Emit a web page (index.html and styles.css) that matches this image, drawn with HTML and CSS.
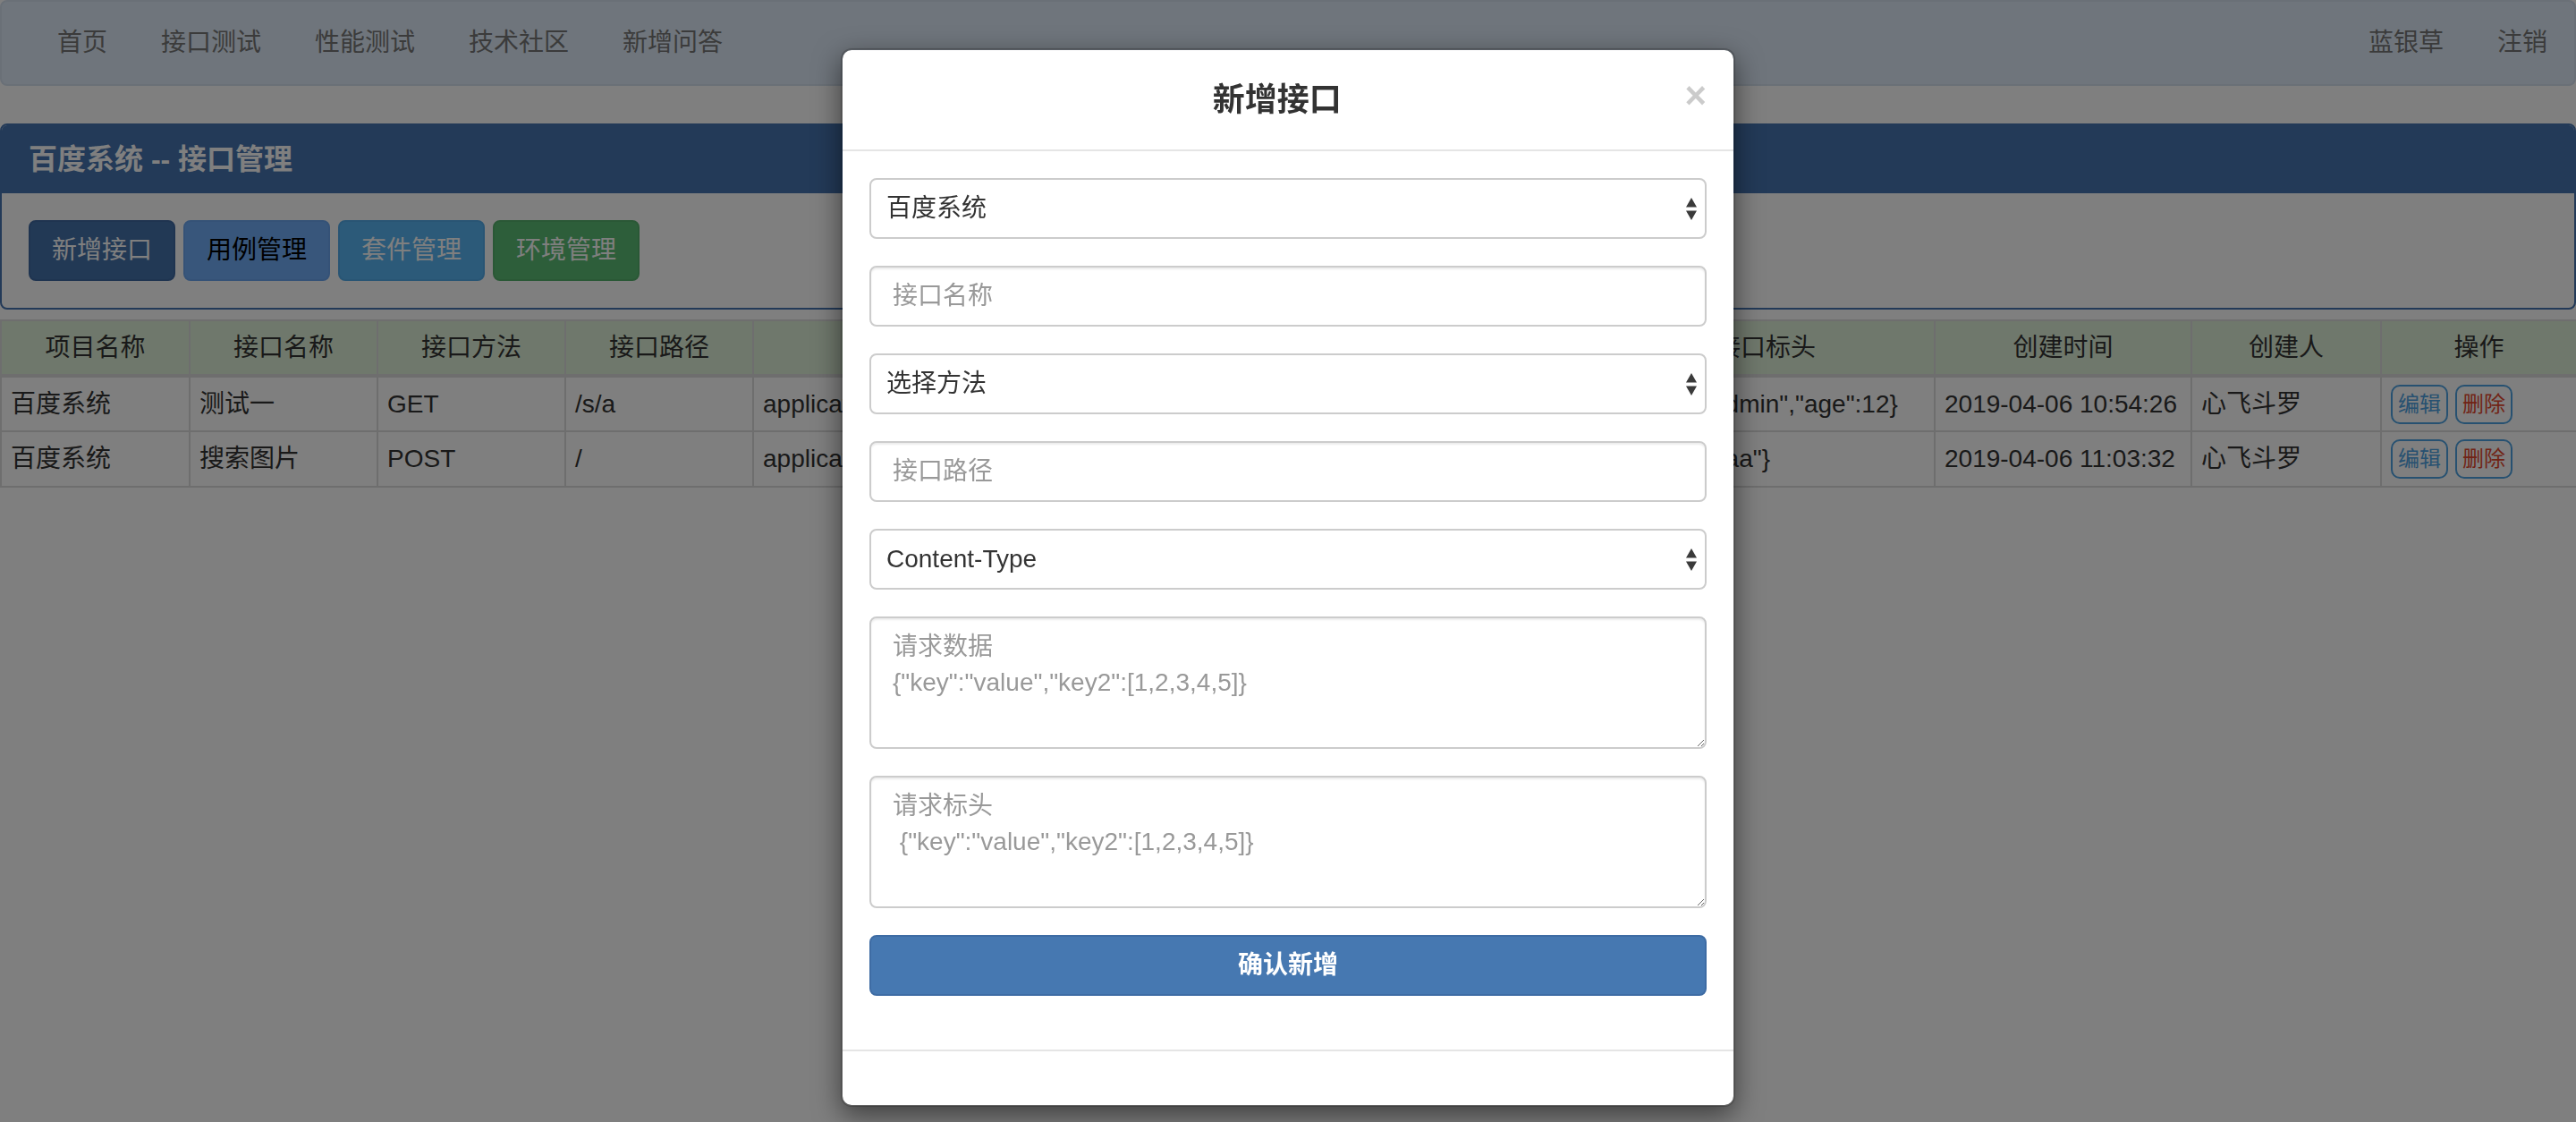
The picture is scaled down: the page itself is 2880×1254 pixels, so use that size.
FILE: index.html
```html
<!DOCTYPE html>
<html lang="zh-CN">
<head>
<meta charset="utf-8">
<title>百度系统 -- 接口管理</title>
<link rel="stylesheet" href="styles.css">
</head>
<body>
<nav class="navbar">
  <ul class="nav nav-left">
    <li>首页</li>
    <li>接口测试</li>
    <li>性能测试</li>
    <li>技术社区</li>
    <li>新增问答</li>
  </ul>
  <ul class="nav nav-right">
    <li>蓝银草</li>
    <li>注销</li>
  </ul>
</nav>

<section class="panel">
  <div class="panel-heading"><h3 class="panel-title">百度系统 -- 接口管理</h3></div>
  <div class="panel-body">
    <button class="btn btn-primary">新增接口</button>
    <button class="btn btn-light">用例管理</button>
    <button class="btn btn-info">套件管理</button>
    <button class="btn btn-success">环境管理</button>
  </div>
</section>

<table class="tbl">
  <colgroup>
    <col class="c1"><col class="c2"><col class="c3"><col class="c4"><col class="c5">
    <col class="c6"><col class="c7"><col class="c8"><col class="c9"><col class="c10">
  </colgroup>
  <thead>
    <tr>
      <th>项目名称</th><th>接口名称</th><th>接口方法</th><th>接口路径</th><th>数据类型</th>
      <th>请求数据</th><th>接口标头</th><th>创建时间</th><th>创建人</th><th>操作</th>
    </tr>
  </thead>
  <tbody>
    <tr>
      <td>百度系统</td><td>测试一</td><td>GET</td><td>/s/a</td><td>application/json</td>
      <td>{"wd":"test"}</td><td>{"name":"admin","age":12}</td><td>2019-04-06 10:54:26</td><td>心飞斗罗</td>
      <td><div class="acts"><span class="act act-edit">编辑</span><span class="act act-del">删除</span></div></td>
    </tr>
    <tr>
      <td>百度系统</td><td>搜索图片</td><td>POST</td><td>/</td><td>application/json</td>
      <td>{"wd":"图片"}</td><td>{"name":"aaa"}</td><td>2019-04-06 11:03:32</td><td>心飞斗罗</td>
      <td><div class="acts"><span class="act act-edit">编辑</span><span class="act act-del">删除</span></div></td>
    </tr>
  </tbody>
</table>

<div class="backdrop"></div>

<div class="modal">
  <div class="modal-header">
    <h4 class="modal-title">新增接口</h4>
    <span class="close">×</span>
  </div>
  <form class="modal-body">
    <div class="form-group">
      <div class="fc select"><span>百度系统</span><svg class="arrows" width="12" height="25" viewBox="0 0 12 25"><path d="M6 0 L12 10.5 L0 10.5 Z M0 14.5 L12 14.5 L6 25 Z" fill="#3a3a3a"/></svg></div>
    </div>
    <div class="form-group">
      <input class="fc" type="text" placeholder="接口名称">
    </div>
    <div class="form-group">
      <div class="fc select"><span>选择方法</span><svg class="arrows" width="12" height="25" viewBox="0 0 12 25"><path d="M6 0 L12 10.5 L0 10.5 Z M0 14.5 L12 14.5 L6 25 Z" fill="#3a3a3a"/></svg></div>
    </div>
    <div class="form-group">
      <input class="fc" type="text" placeholder="接口路径">
    </div>
    <div class="form-group">
      <div class="fc select"><span>Content-Type</span><svg class="arrows" width="12" height="25" viewBox="0 0 12 25"><path d="M6 0 L12 10.5 L0 10.5 Z M0 14.5 L12 14.5 L6 25 Z" fill="#3a3a3a"/></svg></div>
    </div>
    <div class="form-group">
      <textarea class="fc ta" placeholder="请求数据&#10;{&quot;key&quot;:&quot;value&quot;,&quot;key2&quot;:[1,2,3,4,5]}"></textarea>
    </div>
    <div class="form-group">
      <textarea class="fc ta" placeholder="请求标头&#10; {&quot;key&quot;:&quot;value&quot;,&quot;key2&quot;:[1,2,3,4,5]}"></textarea>
    </div>
    <div class="form-group">
      <button type="button" class="btn-confirm">确认新增</button>
    </div>
  </form>
  <div class="modal-footer"></div>
</div>
</body>
</html>
```
FILE: styles.css
```css
* {
  box-sizing: border-box;
}

html, body {
  margin: 0;
  padding: 0;
}

body {
  background: #ffffff;
  color: #333333;
  font-family: "Liberation Sans", "Noto Sans CJK SC", sans-serif;
  font-size: 28px;
  line-height: 40px;
  height: 1254px;
  overflow: hidden;
}

/* ---------- navbar ---------- */
.navbar {
  display: flex;
  justify-content: space-between;
  align-items: center;
  height: 96px;
  background: #deeaf8;
  border: 2px solid #d4e0ef;
  border-radius: 8px;
  padding: 0 0 0 32px;
}

.nav {
  display: flex;
  list-style: none;
  margin: 0;
  padding: 0;
}

.nav li {
  padding: 0 30px;
  color: #777777;
  line-height: 40px;
}

/* ---------- panel ---------- */
.panel {
  margin-top: 42px;
  margin-bottom: 11px;
  border: 2px solid #4674b0;
  border-radius: 8px;
  background: #ffffff;
}

.panel-heading {
  background: #4674b0;
  padding: 20px 30px;
  border-radius: 6px 6px 0 0;
}

.panel-title {
  margin: 0;
  font-size: 32px;
  line-height: 36px;
  font-weight: bold;
  color: #ffffff;
}

.panel-body {
  display: flex;
  gap: 9px;
  padding: 30px;
}

.btn {
  height: 68px;
  padding: 0 24px;
  font-family: inherit;
  font-size: 28px;
  line-height: 40px;
  border: 2px solid transparent;
  border-radius: 8px;
  color: #ffffff;
}

.btn-primary {
  background: #4472ab;
  border-color: #3e68a0;
}

.btn-light {
  background: #70adf7;
  border-color: #6aa5ee;
  color: #000000;
}

.btn-info {
  background: #58b5f3;
  border-color: #52abe8;
}

.btn-success {
  background: #5bbc74;
  border-color: #55b06c;
}

/* ---------- table ---------- */
.tbl {
  width: 100%;
  border-collapse: collapse;
  table-layout: fixed;
}

.c1 { width: 211px; }
.c2 { width: 210px; }
.c3 { width: 210px; }
.c4 { width: 210px; }
.c5 { width: 400px; }
.c6 { width: 543px; }
.c7 { width: 378px; }
.c8 { width: 287px; }
.c9 { width: 212px; }
.c10 { width: 219px; }

.tbl th,
.tbl td {
  height: 62px;
  border: 2px solid #dddddd;
  padding: 9px 10px;
  line-height: 40px;
  white-space: nowrap;
  overflow: hidden;
  vertical-align: middle;
}

.tbl th {
  background: #dff0d8;
  font-weight: normal;
  text-align: center;
  border-bottom-width: 4px;
}

.tbl td {
  text-align: left;
}

.acts {
  display: flex;
  align-items: center;
  gap: 8px;
  height: 40px;
}

.act {
  flex: none;
  height: 44px;
  padding: 0 6px;
  font-size: 24px;
  line-height: 40px;
  border: 2px solid #4fa3e2;
  border-radius: 10px;
}

.act-edit {
  color: #4fa3e2;
}

.act-del {
  color: #e2472c;
}

/* ---------- modal ---------- */
.backdrop {
  position: fixed;
  inset: 0;
  background: rgba(0, 0, 0, 0.5);
}

.modal {
  position: absolute;
  top: 54px;
  left: 50%;
  margin-left: -500px;
  width: 1000px;
  background: #ffffff;
  background-clip: padding-box;
  border: 2px solid rgba(0, 0, 0, 0.2);
  border-radius: 12px;
  box-shadow: 0 10px 30px rgba(0, 0, 0, 0.5);
}

.modal-header {
  display: flex;
  align-items: flex-start;
  padding: 30px;
  border-bottom: 2px solid #e5e5e5;
}

.modal-title {
  flex: 1;
  margin: 0;
  text-align: center;
  font-size: 36px;
  line-height: 51px;
  font-weight: bold;
  color: #333333;
}

.close {
  font-size: 42px;
  line-height: 42px;
  font-weight: bold;
  color: #000000;
  opacity: 0.2;
  padding-top: 0;
}

.modal-body {
  display: block;
  margin: 0;
  padding: 30px;
}

.form-group {
  margin-bottom: 30px;
}

.fc {
  display: block;
  width: 100%;
  height: 68px;
  padding: 12px 24px;
  font-family: "Liberation Sans", "Noto Sans CJK SC", sans-serif;
  font-size: 28px;
  line-height: 40px;
  color: #555555;
  background: #ffffff;
  border: 2px solid #cccccc;
  border-radius: 8px;
  box-shadow: inset 0 2px 2px rgba(0, 0, 0, 0.075);
  outline: none;
}

.fc::placeholder {
  color: #999999;
  opacity: 1;
}

.select {
  display: flex;
  align-items: center;
  justify-content: space-between;
  padding: 0 9px 0 17px;
  color: #333333;
  box-shadow: none;
}

.arrows {
  display: block;
}

.ta {
  height: 148px;
  resize: vertical;
}

.btn-confirm {
  display: block;
  width: 100%;
  height: 68px;
  font-family: inherit;
  font-size: 28px;
  font-weight: bold;
  line-height: 40px;
  color: #ffffff;
  background: #4678b1;
  border: 2px solid #3e6ca4;
  border-radius: 8px;
}

.modal-footer {
  height: 62px;
  border-top: 2px solid #e5e5e5;
}
```
